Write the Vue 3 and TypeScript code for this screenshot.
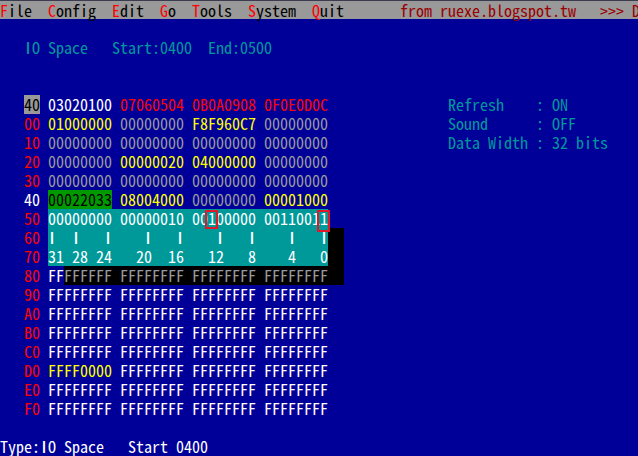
<script setup lang="ts">
interface Run {
  text: string
  tone: string
}

interface MemoryRow {
  label: string
  labelTone: string
  runs: Run[]
}

const run = (tone: string, text: string): Run => ({ tone, text })

const words = (tones: string[], values: string[]): Run[] =>
  values.map((value, i) => run(tones[i], value))

const menus: string[] = ['File', 'Config', 'Edit', 'Go', 'Tools', 'System', 'Quit']
const banner = 'from ruexe.blogspot.tw   >>> D'
const range = 'O Space   Start:0400  End:0500'
const status = 'O Space   Start 0400'

const ZERO = '00000000'
const ONES = 'FFFFFFFF'
const whites = ['white', 'white', 'white', 'white']

const row = (label: string, runs: Run[], labelTone = 'red'): MemoryRow => ({ label, labelTone, runs })
const filled = (label: string): MemoryRow => row(label, words(whites, [ONES, ONES, ONES, ONES]))

const upper: MemoryRow[] = [
  row('40', words(['white', 'red', 'red', 'red'], ['03020100', '07060504', '0B0A0908', '0F0E0D0C']), 'corner'),
  row('00', words(['yellow', 'gray', 'yellow', 'gray'], ['01000000', ZERO, 'F8F960C7', ZERO])),
  row('10', words(['gray', 'gray', 'gray', 'gray'], [ZERO, ZERO, ZERO, ZERO])),
  row('20', words(['gray', 'yellow', 'yellow', 'gray'], [ZERO, '00000020', '04000000', ZERO])),
  row('30', words(['gray', 'gray', 'gray', 'gray'], [ZERO, ZERO, ZERO, ZERO])),
  row('40', words(['selected', 'yellow', 'gray', 'yellow'], ['00022033', '08004000', ZERO, '00001000']), 'white'),
]

const tickCells: string[] = 'I  I   I    I   I    I   I    I   I'.split('')
const scale = '31 28 24   20  16   12   8    4   0'
const shadowed = 'FFFFFF FFFFFFFF FFFFFFFF FFFFFFFF'

const lower: MemoryRow[] = [
  filled('90'),
  filled('A0'),
  filled('B0'),
  filled('C0'),
  row('D0', words(['yellow', 'white', 'white', 'white'], ['FFFF0000', ONES, ONES, ONES])),
  filled('E0'),
  filled('F0'),
]

const bits: Run[] = [
  run('', '00000000 00000010 00'),
  run('marked', '1'),
  run('', '00000 0011001'),
  run('marked last', '1'),
]

const settings: string[] = ['Refresh    : ON', 'Sound      : OFF', 'Data Width : 32 bits']
</script>

<template>
  <main class="screen">
    <header class="menu">
      <span v-for="m in menus" :key="m" class="item"><b>{{ m[0] }}</b>{{ m.slice(1) }}</span>
      <span class="banner">{{ banner }}</span>
    </header>

    <div class="title line"><span class="bar">I</span>{{ range }}</div>

    <div class="body">
      <section class="dump">
        <div v-for="(r, i) in upper" :key="'u' + i" class="row">
          <span :class="r.labelTone">{{ r.label }}</span>
          <span v-for="(w, j) in r.runs" :key="j" :class="w.tone">{{ w.text }}</span>
        </div>

        <div class="row">
          <span class="red">50</span>
          <span class="teal"><span v-for="(b, i) in bits" :key="i" :class="b.tone">{{ b.text }}</span></span>
        </div>
        <div class="row">
          <span class="red">60</span>
          <span class="teal cells"><span v-for="(c, i) in tickCells" :key="i" class="bar">{{ c }}</span></span>
          <span class="shade"></span>
        </div>
        <div class="row">
          <span class="red">70</span>
          <span class="teal">{{ scale }}</span>
          <span class="shade"></span>
        </div>
        <div class="row">
          <span class="red">80</span>
          <span class="white">FF<span class="shadow">{{ shadowed }}</span></span>
        </div>

        <div v-for="r in lower" :key="r.label" class="row">
          <span :class="r.labelTone">{{ r.label }}</span>
          <span v-for="(w, j) in r.runs" :key="j" :class="w.tone">{{ w.text }}</span>
        </div>
      </section>

      <aside class="settings">
        <div v-for="s in settings" :key="s" class="line">{{ s }}</div>
      </aside>
    </div>

    <footer class="line status">Type:<span class="bar">I</span>{{ status }}</footer>
  </main>
</template>

<style>
body {
  margin: 0;
  overflow: hidden;
  background: #000099;
}
</style>

<style scoped>
.screen {
  display: flex;
  flex-direction: column;
  width: 638px;
  height: 456px;
  overflow: hidden;
  background: #000099;
  font-family: "Noto Sans CJK JP", monospace;
  font-feature-settings: "hwid" 1, "liga" 0;
  font-kerning: none;
  font-size: 16px;
  font-weight: 400;
  line-height: 19px;
  white-space: pre;
}

.menu {
  display: flex;
  gap: 16px;
  box-sizing: border-box;
  height: 19px;
  line-height: 18px;
  border-top: 1px solid #3c3c50;
  background: #999999;
  color: #000000;
}

.item {
  flex: none;
}

.menu b {
  display: inline-block;
  width: 8px;
  font-weight: inherit;
  color: #ff0000;
}

.banner {
  flex: none;
  margin-left: 40px;
  color: #990000;
}

.line {
  height: 19px;
}

.bar {
  display: inline-block;
  flex: none;
  width: 8px;
  height: 19px;
  vertical-align: top;
  text-align: center;
  font-feature-settings: normal;
  font-weight: 500;
}

.title {
  margin-top: 19px;
  padding-left: 24px;
  color: #009999;
}

.body {
  display: flex;
  margin-top: 38px;
  padding-left: 24px;
}

.dump {
  width: 424px;
}

.row {
  display: flex;
  gap: 8px;
  height: 19px;
}

.red {
  color: #ff0000;
}

.white {
  color: #ffffff;
}

.gray {
  color: #999999;
}

.yellow {
  color: #ffff00;
}

.corner {
  background: #999999;
  color: #000000;
}

.selected {
  background: #009900;
  color: #000000;
}

.teal {
  width: 280px;
  background: #009999;
  color: #ffffff;
}

.cells {
  display: flex;
}

.shade {
  width: 16px;
  margin-left: -8px;
  background: #000000;
}

.shadow {
  display: inline-block;
  height: 19px;
  padding-right: 16px;
  vertical-align: top;
  background: #000000;
  color: #999999;
}

.marked {
  display: inline-block;
  position: relative;
  height: 19px;
  vertical-align: top;
}

.marked::after {
  content: "";
  position: absolute;
  z-index: 1;
  left: -3px;
  top: 1px;
  box-sizing: border-box;
  width: 13px;
  height: 19px;
  border: 2px solid #e01828;
}

.marked.last::after {
  height: 22px;
}

.settings {
  color: #009999;
}

.status {
  margin-top: 19px;
  color: #ffffff;
}
</style>
